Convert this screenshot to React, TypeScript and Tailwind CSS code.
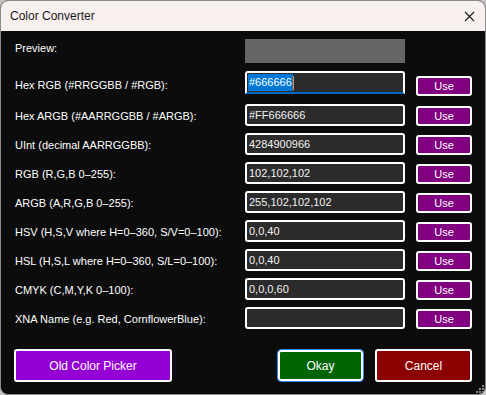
import React from "react";

const font = { fontFamily: '"Liberation Sans", Arial, sans-serif' };

type Row = { label: string; value: string };

const rows: Row[] = [
  { label: "Hex ARGB (#AARRGGBB / #ARGB):", value: "#FF666666" },
  { label: "UInt (decimal AARRGGBB):", value: "4284900966" },
  { label: "RGB (R,G,B 0–255):", value: "102,102,102" },
  { label: "ARGB (A,R,G,B 0–255):", value: "255,102,102,102" },
  { label: "HSV (H,S,V where H=0–360, S/V=0–100):", value: "0,0,40" },
  { label: "HSL (H,S,L where H=0–360, S/L=0–100):", value: "0,0,40" },
  { label: "CMYK (C,M,Y,K 0–100):", value: "0,0,0,60" },
  { label: "XNA Name (e.g. Red, CornflowerBlue):", value: "" },
];

const UseButton = ({ className = "" }: { className?: string }) => (
  <div
    className={`ml-[11px] flex h-[20px] w-[56px] items-center justify-center rounded-[3px] border-2 border-white bg-[#800080] text-[11px] text-white ${className}`}
  >
    Use
  </div>
);

export default function App() {
  return (
    <div className="h-[395px] w-[486px] bg-[#c4c4c4]" style={font}>
      <div className="relative flex h-full flex-col overflow-hidden rounded-[8px] border border-[#8c8c8c] bg-[#0c0c0c]">
        {/* title bar */}
        <div className="flex h-[30px] shrink-0 items-center justify-between bg-[#f8f0ee] pl-[9px] pr-[9px]">
          <span className="text-[12px] text-[#1a1a1a]">Color Converter</span>
          <svg width="11" height="11" viewBox="0 0 11 11" className="mr-[1px]">
            <path d="M1 1 L10 10 M10 1 L1 10" stroke="#1a1a1a" strokeWidth="1.1" />
          </svg>
        </div>

        <div className="flex flex-col pl-[14px] pr-[13px] text-[11px] text-white">
          {/* preview */}
          <div className="mt-[8px] flex h-[24px] items-center">
            <div className="w-[230px] pb-[6px]">Preview:</div>
            <div className="h-[24px] w-[160px] bg-[#666666]" />
          </div>

          {/* hex rgb, focused */}
          <div className="mt-[8px] flex h-[22px] items-start">
            <div className="w-[230px] pt-[6px]">Hex RGB (#RRGGBB / #RGB):</div>
            <div className="flex h-[23px] w-[160px] items-center rounded-t-[3px] border-2 border-white border-b-[#0067c0] bg-[#2b2b2b] pl-[1px]">
              <span className="bg-[#0078d7] px-[1px] text-white">#666666</span>
              <span className="h-[14px] w-[1px] bg-[#ff8c1a]" />
            </div>
            <UseButton className="mt-[5px]" />
          </div>

          {rows.map((r, i) => (
            <div
              key={r.label}
              className={`flex h-[22px] items-end ${i === 0 ? "mt-[11px]" : "mt-[7px]"}`}
            >
              <div className="w-[230px] self-center pt-[3px]">{r.label}</div>
              <div className="flex h-[22px] w-[160px] items-center rounded-[3px] border-2 border-white bg-[#2b2b2b] pl-[2px] text-[#f2f2f2]">
                {r.value}
              </div>
              <UseButton />
            </div>
          ))}

          {/* bottom buttons */}
          <div className="mt-[20px] flex h-[33px] items-center text-[12px]">
            <div className="-ml-[1px] flex h-[33px] w-[158px] items-center justify-center rounded-[3px] border-2 border-white bg-[#9400d3]">
              Old Color Picker
            </div>
            <div className="flex-1" />
            <div className="flex h-[31px] w-[85px] items-center justify-center rounded-[3px] border-2 border-white bg-[#006400] outline outline-1 outline-[#2a8cff]">
              Okay
            </div>
            <div className="ml-[12px] flex h-[33px] w-[97px] items-center justify-center rounded-[3px] border-2 border-white bg-[#8b0000]">
              Cancel
            </div>
          </div>
        </div>

        {/* resize grip */}
        <svg
          width="8"
          height="8"
          viewBox="0 0 8 8"
          className="absolute bottom-[1px] right-[1px]"
        >
          <rect x="6" y="0" width="2" height="2" fill="#8a8a8a" />
          <rect x="3" y="3" width="2" height="2" fill="#8a8a8a" />
          <rect x="6" y="3" width="2" height="2" fill="#8a8a8a" />
          <rect x="0" y="6" width="2" height="2" fill="#8a8a8a" />
          <rect x="3" y="6" width="2" height="2" fill="#8a8a8a" />
          <rect x="6" y="6" width="2" height="2" fill="#8a8a8a" />
        </svg>
      </div>
    </div>
  );
}
